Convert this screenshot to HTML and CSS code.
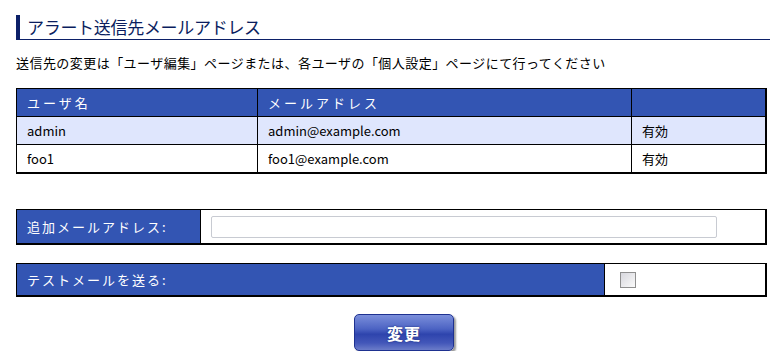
FILE: index.html
```html
<!DOCTYPE html>
<html lang="ja">
<head>
  <meta charset="UTF-8">
  <title>アラート送信先メールアドレス</title>
  <link rel="stylesheet" href="styles.css">
</head>
<body>
  <div class="page">
    <h1 class="title">アラート送信先メールアドレス</h1>
    <p class="note">送信先の変更は「ユーザ編集」ページまたは、各ユーザの「個人設定」ページにて行ってください</p>

    <table class="list">
      <tr>
        <th class="c-name">ユーザ名</th>
        <th class="c-mail">メールアドレス</th>
        <th class="c-state"></th>
      </tr>
      <tr class="odd">
        <td>admin</td>
        <td>admin@example.com</td>
        <td>有効</td>
      </tr>
      <tr>
        <td>foo1</td>
        <td>foo1@example.com</td>
        <td>有効</td>
      </tr>
    </table>

    <table class="form add">
      <tr>
        <th>追加メールアドレス:</th>
        <td><input type="text" class="mail-field"></td>
      </tr>
    </table>

    <table class="form test">
      <tr>
        <th>テストメールを送る:</th>
        <td><span class="check"></span></td>
      </tr>
    </table>

    <div class="actions">
      <button class="submit">変更</button>
    </div>
  </div>
</body>
</html>
```

FILE: styles.css
```css
body {
  margin: 0;
  background: #fff;
  color: #000;
  font-family: "Noto Sans CJK JP", "DejaVu Sans", sans-serif;
  font-size: 13px;
}
.page {
  padding: 15px 11px 0 16px;
}
.title {
  margin: 0;
  height: 24px;
  padding-left: 7px;
  border-left: 4px solid #0c2068;
  border-bottom: 1px solid #0c2068;
  font-size: 17px;
  font-weight: normal;
  line-height: 23px;
  letter-spacing: -0.3px;
  color: #0a1d5e;
}
.note {
  margin: 13px 0 0;
  line-height: 20px;
  letter-spacing: 0.45px;
}
table {
  border-collapse: separate;
  border-spacing: 0;
  table-layout: fixed;
  width: 751px;
  border: 1px solid #000;
  border-right-width: 2px;
  border-bottom-width: 2px;
}
th, td {
  box-sizing: border-box;
  padding: 0 10px;
  text-align: left;
  line-height: 27px;
}
th {
  background: #3355b3;
  color: #fff;
  font-weight: normal;
}
.list {
  margin-top: 15px;
}
.list th {
  letter-spacing: 3px;
}
.list th + th,
.list td + td {
  border-left: 1px solid #000;
}
.list tr + tr td {
  border-top: 1px solid #000;
}
.list .odd td {
  background: #dfe6fd;
}
.c-name { width: 240px; }
.c-mail { width: 374px; }
.form th {
  letter-spacing: 2px;
}
.form td {
  border-left: 1px solid #000;
}
.add {
  margin-top: 35px;
}
.add th {
  width: 183px;
  line-height: 33px;
}
.mail-field {
  display: block;
  width: 506px;
  height: 22px;
  box-sizing: border-box;
  border: 1px solid #c8cbd2;
  border-radius: 2px;
  margin: 0;
}
.test {
  margin-top: 18px;
}
.test th {
  width: 587px;
  line-height: 31px;
}
.test td {
  padding-left: 15px;
}
.check {
  display: block;
  width: 16px;
  height: 16px;
  box-sizing: border-box;
  border: 1px solid #8f8f8f;
  background: linear-gradient(135deg, #d8d8de, #fafafa);
}
.actions {
  display: flex;
  padding: 17px 0 0 338px;
}
.submit {
  width: 100px;
  height: 37px;
  border: 1px solid #1e3190;
  border-radius: 5px;
  background: linear-gradient(#7b8fdb 0%, #4c63c3 40%, #2e44ad 55%, #4357b9 80%, #6b7cc9 100%);
  box-shadow: 2px 2px 2px #9a9a9a;
  color: #fff;
  font-family: "Noto Sans CJK JP", sans-serif;
  font-size: 16px;
  font-weight: bold;
  letter-spacing: 1px;
  text-shadow: 0 0 2px #1a2870;
  cursor: pointer;
}
```
